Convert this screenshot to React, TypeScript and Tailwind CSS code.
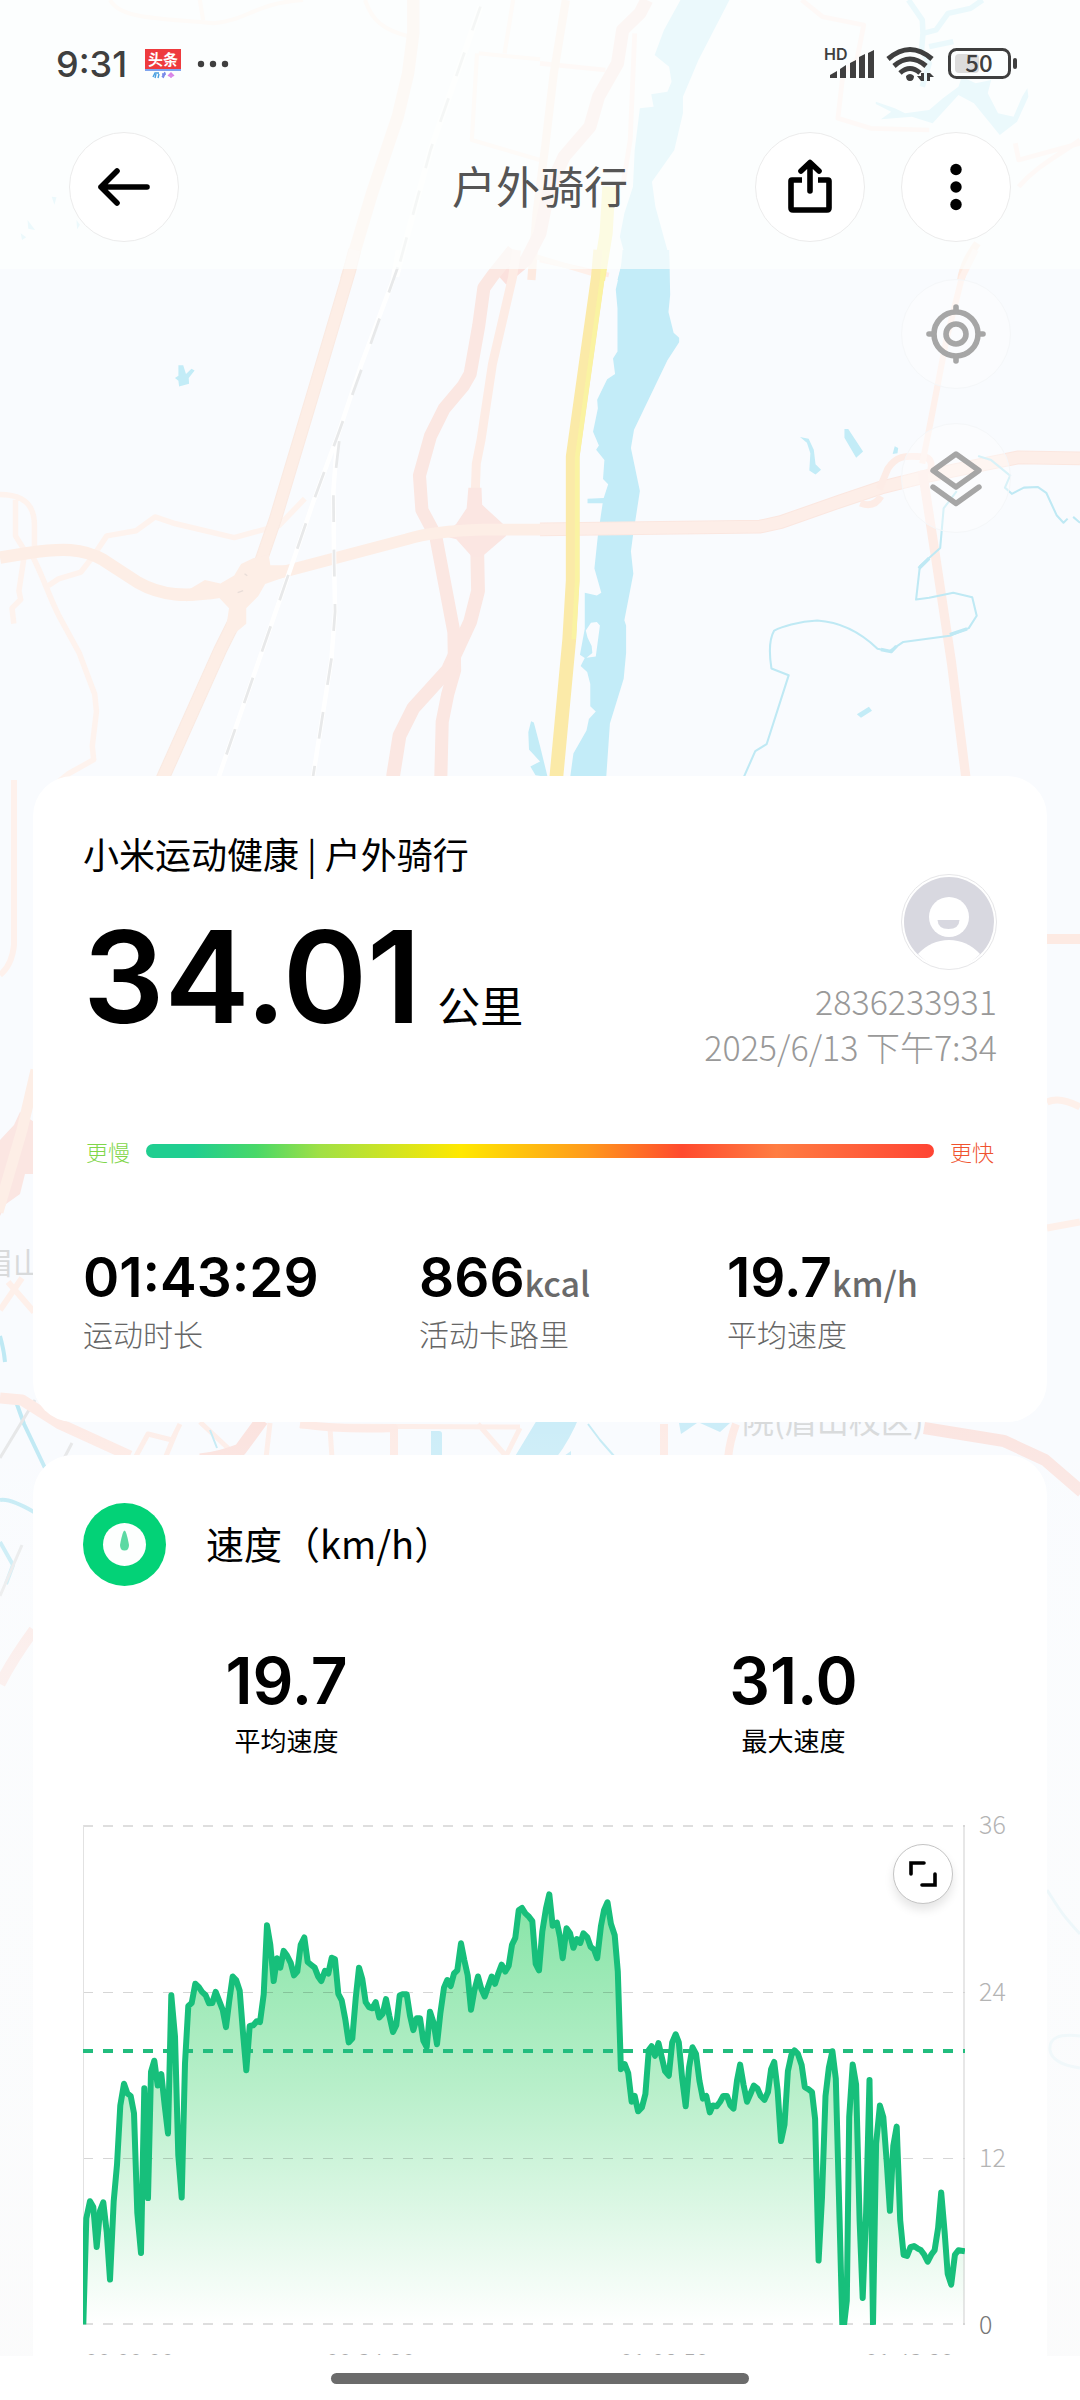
import type { ReactNode } from "react";

const FONT = "font-['Noto_Sans_CJK_SC','Noto_Sans',sans-serif]";

/* ---------- map ---------- */

function MapBackdrop() {
  return (
    <svg
      className="absolute inset-0 h-full w-full"
      viewBox="0 0 1080 2400"
      preserveAspectRatio="xMidYMin slice"
      aria-hidden="true"
      fill="none"
    >
      <defs>
        <linearGradient id="mapFade" x1="0" y1="0" x2="0" y2="1">
          <stop offset="0" stopColor="#fcfdfd" stopOpacity="0" />
          <stop offset="0.25" stopColor="#fcfdfd" stopOpacity="0.5" />
          <stop offset="1" stopColor="#fbfbfb" stopOpacity="0.9" />
        </linearGradient>
      </defs>
      <rect width="1080" height="2400" fill="#f9fbfe" />

      {/* north-west tile */}
      <g transform="scale(0.3444 0.3333)" strokeLinejoin="round">
        <path d="M320 0C350 60 480 55 620 70C720 60 740 10 880 0M580 0L590 60M1060 0C1080 60 1110 90 1190 110M1490 0L1465 160M1390 160L1568 178M1385 160L1370 420L1568 480" stroke="#fff0ea" strokeWidth="12" />
        <path d="M1200 0L1200 100L1185 220L1155 350L1080 580L1005 840" stroke="#fdeae1" strokeWidth="36" />
        <path d="M1395 20L1250 450L1150 830" stroke="#ffffff" strokeWidth="18" />
        <path d="M1395 20L1250 450L1150 830" stroke="#e3e3e3" strokeWidth="8" strokeDasharray="75 70" />
        <path d="M150 590l14 2-6 22zM80 660l22 30-20-4zM60 700l16 12-12 8zM222 660l10 14-8 14z" fill="#c3ecf7" />
      </g>

      {/* north-east tile */}
      <g transform="translate(540 0) scale(0.3444 0.3333)" strokeLinejoin="round">
        <path d="M275 100L262 420L240 560M0 190L190 210M760 0L820 50L940 75L920 180L880 220L865 355L960 385L1130 390M1380 430L1390 480L1568 430M1390 560C1440 500 1500 470 1568 420M0 780L200 825" stroke="#ffece6" strokeWidth="14" />
        <path d="M75 0L40 220L15 440L-10 640L-25 840" stroke="#fdeae1" strokeWidth="24" />
        <path d="M310 0L290 40L240 90L225 190L170 290L145 380L70 470L25 570L0 700L-40 780L-110 840" stroke="#fbe1dd" strokeWidth="38" />
        <path d="M408 0L550 0L490 120L460 180L415 290L415 340L390 450L325 545L335 620L375 770L375 840L225 840L245 760L232 710L245 640L270 560L275 450L290 325L330 320L323 283L370 275L382 245L375 200L333 165L360 90Z" fill="#c0eaf7" />
        <path d="M200 560L192 700L170 840" stroke="#fbf0a0" strokeWidth="38" />
        <path d="M1070 0L1110 60L1112 100L1150 90L1185 40L1250 25L1285 0M1112 100L1108 150L1130 190L1110 260M1130 140L1200 125" stroke="#c0eaf7" strokeWidth="16" />
        <path d="M975 305L1030 325L1060 340L1130 330L1170 295L1215 260L1225 230L1265 250L1310 240L1300 280L1330 340L1375 350L1400 290L1415 265L1418 290L1385 365L1335 405L1260 310L1215 285L1140 370L1080 350L990 358L1020 335L975 312Z" fill="#c0eaf7" />
        <path d="M1270 730C1250 760 1230 790 1222 840" stroke="#fdeae1" strokeWidth="22" />
      </g>

      {/* middle-left tile */}
      <g transform="translate(0 250) scale(0.3444)" strokeLinejoin="round">
        <g stroke="#fef3ee" strokeWidth="16">
          <path d="M0 710C70 710 100 740 100 800L100 860M45 725L45 830L70 870M70 890L55 990L60 1015L35 1040L40 1085M95 890C130 960 140 1000 170 1060L230 1170L275 1290L280 1340L268 1440L272 1480L200 1520L150 1560" />
          <path d="M140 975L170 955L235 935L270 890L310 830L395 815L450 775L510 795L680 835L810 800L885 722" />
        </g>
        <path d="M1030 0L1015 60L905 430L800 780L755 910" stroke="#faeae2" strokeWidth="38" />
        <path d="M1030 0L1015 60L905 430L800 780L755 910" stroke="#fdeee6" strokeWidth="32" />
        <path d="M0 893L80 880C180 865 240 865 300 900L400 965C470 1005 540 1008 640 992" stroke="#fdeee6" strokeWidth="36" />
        <path d="M690 1060L640 1160L472 1535" stroke="#faeae2" strokeWidth="40" />
        <path d="M690 1060L640 1160L472 1535" stroke="#fdeee6" strokeWidth="34" />
        <path d="M1490 0L1430 75L1405 110L1390 220L1365 360L1345 395L1290 460L1250 540L1218 655L1225 755L1265 830L1318 1110L1320 1220L1300 1290L1284 1370L1280 1530" stroke="#fbe7e2" strokeWidth="38" />
        <path d="M1385 840L1388 990L1365 1080L1300 1220L1200 1330L1160 1410L1141 1530" stroke="#fbe7e2" strokeWidth="40" />
        <path d="M1500 0L1488 80L1430 330L1397 550L1383 620L1378 760" stroke="#fdece5" strokeWidth="26" />
        <path d="M1360 690L1398 690L1400 740L1460 795L1470 830L1400 890L1370 890L1325 840L1285 830L1325 795L1355 750Z" fill="#fbe6e2" />
        <path d="M760 950L840 930L1180 840C1240 822 1300 815 1400 812L1568 812" stroke="#fdeee6" strokeWidth="34" />
        <path d="M680 945L700 912L735 895L780 885L785 915L840 915L840 945L770 970L750 1005L715 1040L715 1085L650 1140L665 1040L635 1008L540 1020L550 985L595 958L640 968Z" fill="#fdeee6" />
        <path d="M690 995l16-6M710 940l8 6" stroke="#e9ddd8" strokeWidth="4" />
        <path d="M1155 0L1140 90L1050 330L980 540L910 730L835 950L635 1530M980 540L968 700L970 900L973 1050L962 1190L908 1535" stroke="#ffffff" strokeWidth="13" />
        <path d="M1155 50L1070 290L980 540L910 730L835 950L635 1530M985 555L968 700L970 900L973 1050L962 1190L908 1535" stroke="#e8e9ea" strokeWidth="8" strokeDasharray="78 80" />
        <path d="M518 335L532 335L540 360L556 345L565 350L548 372L549 388L520 396L518 380L508 372L518 365Z" fill="#c3ecf7" />
        <path d="M1534 1400L1542 1368L1550 1372L1568 1440L1590 1530L1555 1525L1540 1500L1568 1485L1536 1450Z" fill="#c3ecf7" />
      </g>

      {/* middle-right tile */}
      <g transform="translate(540 250) scale(0.3444)" strokeLinejoin="round">
        <path d="M240 0L375 0L378 130L373 180L388 240L404 255L404 268L370 320L273 522L264 575L290 700L270 830L264 875L271 940L245 1075L250 1090L250 1170L243 1245L203 1375L192 1535L87 1535L97 1462L135 1395L142 1362L162 1340L146 1325L146 1260L137 1225L118 1208L130 1185L116 1175L130 1100L130 995L165 1003L178 995L158 925L168 830L182 735L138 735L138 722L185 720L198 680L183 665L187 610L163 580L171 568L154 528L168 460L166 435L195 375L218 360L212 315L225 295L225 170L220 115L235 50Z" fill="#c3ecf8" />
        <path d="M133 1105L148 1082L165 1080L174 1090L162 1180L135 1184L152 1170L150 1150L138 1125Z" fill="#f9fbfe" />
        <path d="M-10 20L150 68" stroke="#fef0ea" strokeWidth="14" />
        <path d="M0 811L640 803L700 790L870 730L990 690L1130 655L1300 620L1390 602L1568 605" stroke="#fbe7e0" strokeWidth="40" />
        <path d="M0 811L640 803L700 790L870 730L990 690L1130 655L1300 620L1390 602L1568 605" stroke="#fdeee8" strokeWidth="34" />
        <path d="M985 695L1010 635C1040 590 1070 600 1115 600Q1145 605 1132 650M930 735Q970 750 990 715" stroke="#fdece6" strokeWidth="20" />
        <path d="M1110 640L1150 900L1195 1200L1237 1535" stroke="#fdece6" strokeWidth="27" />
        <path d="M1265 0L1225 80L1180 260L1130 520L1110 620" stroke="#fef1ec" strokeWidth="18" />
        <path d="M175 0L168 80L130 350L95 600L95 960L85 1130L47 1535" stroke="#fbeaa8" strokeWidth="40" />
        <path d="M188 0L181 80L143 350L108 600L108 960L98 1130" stroke="#faf3a2" strokeWidth="13" />
        <path d="M755 543L780 548L795 580L800 622L816 638L800 652L782 640L785 590L775 560ZM884 520L895 520L938 585L918 603L884 545ZM1030 570l10 5-2 15-14 2zM920 1348L955 1326L964 1338L932 1358Z" fill="#c3ecf7" />
        <g stroke="#bfe9f4" strokeWidth="6">
          <path d="M1272 598L1310 610L1365 655L1350 690L1370 708L1405 690L1445 688L1470 705L1500 770L1520 792L1532 780M1548 775L1568 792" />
          <path d="M1210 700L1172 750L1162 865L1103 918L1092 1015L1130 1010L1200 995L1255 1008L1268 1062L1245 1098L1190 1120L1055 1138L1015 1165L980 1158C930 1110 870 1080 805 1076C750 1078 700 1095 680 1105Q660 1140 672 1215L722 1235L658 1435L625 1455L592 1530" />
          <path d="M990 1160L1020 1166L1035 1150M1190 1117L1240 1100M1100 925L1130 895" strokeWidth="10" />
        </g>
      </g>

      {/* southern strip and the margins beside the cards */}
      <g strokeLinejoin="round">
        <path d="M14 780L14 945Q12 965 0 975" stroke="#fef1ec" strokeWidth="6" />
        <path d="M0 1140L14 1125L20 1112L34 1122L34 1174L25 1174L20 1194L6 1204L0 1216Z" fill="#fbe6e2" />
        <path d="M36 1070L22 1130L-2 1212" stroke="#fdeee6" strokeWidth="11" />
        <path d="M8 1282L34 1312M22 1278L0 1310" stroke="#fef0ea" strokeWidth="6" />
        <path d="M0 1336Q4 1350 5 1362M14 1396L24 1424L45 1468M0 1500Q10 1498 34 1512M0 1542L13 1565L6 1584" stroke="#bfe9f4" strokeWidth="4" />
        <path d="M1047 939L1080 939" stroke="#fdeae3" strokeWidth="10" />
        <path d="M1047 1102Q1060 1096 1080 1107M1047 1228L1080 1222" stroke="#fef0ea" strokeWidth="7" />
        <path d="M35 1400L0 1458M72 1443L60 1466M22 1545L0 1596" stroke="#e6e7e8" strokeWidth="3" />
        <path d="M0 1398L22 1400L60 1424L130 1456" stroke="#fdebe6" strokeWidth="11" />
        <path d="M135 1458L148 1434L172 1440L180 1424M166 1456L176 1432M200 1422L230 1450M270 1423L266 1458M330 1428L332 1458M300 1426L520 1427M478 1424L506 1456L520 1428" stroke="#fdeee9" strokeWidth="5" />
        <path d="M300 1424Q340 1430 394 1428L394 1458M664 1424L664 1458M736 1424Q730 1440 728 1458" stroke="#fdebe6" strokeWidth="8" />
        <path d="M262 1420L240 1450Q220 1458 200 1460" stroke="#fbe3df" strokeWidth="13" />
        <path d="M210 1430L217 1448M588 1424L600 1440L614 1456" stroke="#c5ebf5" strokeWidth="2" />
        <path d="M431 1431h8q3 0 3 3v24h-11zM540 1415L580 1415Q570 1440 556 1458L514 1458ZM564 1456l7-5v7zM679 1423h18l-10 7-6 4zM700 1423h30l-10 9z" fill="#ccedf8" />
        <path d="M924 1428L1004 1441L1045 1460L1082 1492" stroke="#fbe5e1" strokeWidth="12" />
        <path d="M0 1684Q12 1660 34 1630" stroke="#fbe3df" strokeWidth="11" />
        <path d="M1047 1890C1060 1910 1060 1912 1080 1934M1080 2036Q1048 2032 1050 2050Q1052 2064 1080 2068" stroke="#d5eef6" strokeWidth="3" />
      </g>
      <g fill="#d8dadb" className={FONT}>
        <text x="-17" y="1274" fontSize="30">眉山</text>
        <text x="742" y="1433" fontSize="32">院(眉山校区)</text>
      </g>
      <rect y="1420" width="1080" height="980" fill="url(#mapFade)" />
    </svg>
  );
}

/* ---------- status bar ---------- */

function StatusBar() {
  return (
    <div className="flex h-[128px] items-center justify-between pl-[56px] pr-[62px] text-[#3f3f3f]">
      <div className="flex items-center">
        <span className="font-['Inter',sans-serif] text-[36px] font-medium leading-[48px]">9:31</span>
        <div className="ml-[18px] flex flex-col items-center">
          <span className="flex h-[22px] w-[36px] items-center justify-center border-b-2 border-[#7fa4ee] bg-[#ee3b3e] text-[15px] font-bold leading-[20px] text-white">
            头条
          </span>
          <svg width="24" height="8" viewBox="0 0 24 8" fill="none" strokeWidth="1.4" aria-hidden="true">
            <path d="M2 6l2-4 4 0M5 3l-1 4M8 3l-1 4" stroke="#4a9fe0" />
            <path d="M11 6l3-5M11 3l4 0M14 3l-2 4" stroke="#7a8be8" />
            <path d="M17 5l3-3 3 3M18 5h4M20 3v4" stroke="#d884e6" />
          </svg>
        </div>
        <svg className="ml-[16px]" width="32" height="8" viewBox="0 0 32 8" fill="#3f3f3f" aria-hidden="true">
          <circle cx="4" cy="4" r="3.2" />
          <circle cx="16" cy="4" r="3.2" />
          <circle cx="28" cy="4" r="3.2" />
        </svg>
      </div>
      <div className="flex items-center">
        <svg className="overflow-visible" width="110" height="40" viewBox="0 0 110 40" fill="#3f3f3f" aria-hidden="true">
          <text x="0" y="16" fontSize="16" fontWeight="600" fontFamily="Inter, sans-serif">HD</text>
          <path d="M6 34v-3l7-4v7zM16 34V25l6-4v13zM26 34V19l6-3v18zM35 34V13l6-3v24zM44 34V9l6-3v28z" />
          <g fill="none" stroke="#3f3f3f" strokeWidth="5">
            <path d="M64 15Q86-4 108 15" />
            <path d="M70 22Q86 8 102 22" />
            <path d="M76 29Q86 20 96 29" />
          </g>
          <path d="M82 32q4-4 8 0q0 5-4 5t-4-5zM97 29h3v8h-3l-4-5h4zM103 37v-8l3 0 4 4h-4v4z" />
        </svg>
        <svg className="ml-[14px]" width="70" height="32" viewBox="0 0 70 32" aria-hidden="true">
          <rect x="1.5" y="1.5" width="60" height="28" rx="7" fill="none" stroke="#3f3f3f" strokeWidth="3" />
          <rect x="7" y="6" width="24" height="19" rx="4" fill="#dcdcdc" />
          <rect x="65" y="10" width="4" height="11" rx="2" fill="#3f3f3f" />
          <text x="31" y="24" fontSize="24" fontWeight="500" textAnchor="middle" fill="#3f3f3f">50</text>
        </svg>
      </div>
    </div>
  );
}

/* ---------- buttons ---------- */

function RoundButton({ label, children }: { label: string; children: ReactNode }) {
  return (
    <button
      type="button"
      aria-label={label}
      className="flex size-[110px] items-center justify-center rounded-full border border-[#ececec] bg-white"
    >
      {children}
    </button>
  );
}

function MapButton({ label, children }: { label: string; children: ReactNode }) {
  return (
    <button
      type="button"
      aria-label={label}
      className="flex size-[110px] items-center justify-center rounded-full border border-[#f5f7f9] bg-white/40"
    >
      {children}
    </button>
  );
}

function TopBar() {
  return (
    <div className="flex h-[118px] items-center justify-between px-[69px]">
      <div className="flex flex-1">
        <RoundButton label="返回">
          <svg width="54" height="40" viewBox="0 0 54 40" fill="none" stroke="#000" strokeWidth="5.6" strokeLinecap="round" strokeLinejoin="round" aria-hidden="true">
            <path d="M50 20H4M20 4L4 20L20 36" />
          </svg>
        </RoundButton>
      </div>
      <h1 className="pb-1 text-[44px] font-normal leading-[56px] text-[#555]">户外骑行</h1>
      <div className="flex flex-1 justify-end gap-[36px]">
        <RoundButton label="分享">
          <svg width="46" height="56" viewBox="0 0 46 56" fill="none" stroke="#000" strokeWidth="5.6" strokeLinecap="round" strokeLinejoin="round" aria-hidden="true">
            <path d="M15 21H5Q4 21 4 22V49Q4 51 6 51H40Q42 51 42 49V22Q42 21 41 21H31" strokeLinecap="butt" />
            <path d="M23 32V4M14 12L23 3.500L32 12" />
          </svg>
        </RoundButton>
        <RoundButton label="更多">
          <svg width="12" height="48" viewBox="0 0 12 48" fill="#000" aria-hidden="true">
            <circle cx="6" cy="6.500" r="5.700" />
            <circle cx="6" cy="24" r="5.700" />
            <circle cx="6" cy="41.500" r="5.700" />
          </svg>
        </RoundButton>
      </div>
    </div>
  );
}

function MapControls() {
  return (
    <div className="flex h-[507px] flex-col items-end gap-[34px] pr-[69px] pt-[10px]">
      <MapButton label="定位">
        <svg width="62" height="62" viewBox="0 0 62 62" fill="none" stroke="#a6a6a6" strokeWidth="5.600" strokeLinecap="round" aria-hidden="true">
          <circle cx="31" cy="31" r="22" />
          <circle cx="31" cy="31" r="10" />
          <path d="M31 4v4M31 54v4M4 31h4M54 31h4" />
        </svg>
      </MapButton>
      <MapButton label="图层">
        <svg width="56" height="60" viewBox="0 0 56 60" fill="none" stroke="#a6a6a6" strokeWidth="5.400" strokeLinecap="round" strokeLinejoin="round" aria-hidden="true">
          <path d="M28 6L51 22.500L28 39L5 22.500Z" />
          <path d="M5 39L28 55.500L51 39" />
        </svg>
      </MapButton>
    </div>
  );
}

/* ---------- summary card ---------- */

const stats = [
  { value: "01:43:29", unit: "", label: "运动时长" },
  { value: "866", unit: "kcal", label: "活动卡路里" },
  { value: "19.7", unit: "km/h", label: "平均速度" },
];

function Avatar() {
  return (
    <svg className="size-[96px]" viewBox="0 0 96 96" role="img" aria-label="头像">
      <circle cx="48" cy="48" r="47.500" fill="#fff" stroke="#e6e6e8" />
      <circle cx="48" cy="48" r="45" fill="#d8d8e0" />
      <circle cx="48" cy="43" r="20" fill="#fff" />
      <path d="M36.500 46H58.500Q58 55 47.500 55T36.500 46Z" fill="#d8d8e0" />
      <path d="M17 80Q30 66 48 66T79 80Q66 94 48 94T17 80Z" fill="#fff" />
    </svg>
  );
}

function SummaryCard() {
  return (
    <section className="mx-[33px] rounded-[40px] bg-white px-[50px] pb-[69px] pt-[53px]">
      <div className="flex justify-between">
        <div>
          <h2 className="text-[36px] font-normal leading-[48px] text-black">小米运动健康 | 户外骑行</h2>
          <p className="mt-[28px] flex items-baseline leading-[48px] text-black">
            <span className="font-['Inter',sans-serif] text-[128px] font-semibold leading-[144px]">34.01</span>
            <span className="ml-[16px] text-[43px]">公里</span>
          </p>
        </div>
        <div className="flex flex-col items-end pt-[45px] text-[34px] font-light leading-[46px] text-[#999]">
          <Avatar />
          <span className="mt-[8px]">2836233931</span>
          <span>2025/6/13 下午7:34</span>
        </div>
      </div>
      <div className="mt-[65px] flex h-[32px] items-center gap-[16px] px-[3px] text-[22px] leading-[32px]">
        <span className="font-light text-[#7fd64a]">更慢</span>
        <div className="h-[14px] flex-1 rounded-full bg-[linear-gradient(90deg,#20ce90_0%,#20ce90_6%,#48d868_14%,#a0e045_22%,#ffe800_40%,#ff9a1c_56%,#ff4a2e_68%,#ff7d42_80%,#ff4433_100%)]" />
        <span className="font-light text-[#f0532f]">更快</span>
      </div>
      <dl className="mt-[78px] grid grid-cols-[336fr_308fr_270fr]">
        {stats.map((s) => (
          <div key={s.label} className="flex flex-col-reverse">
            <dt className="mt-[4px] text-[30px] font-light leading-[40px] text-[#666]">{s.label}</dt>
            <dd className="flex h-[64px] items-baseline whitespace-nowrap text-black">
              <span className="font-['Inter',sans-serif] text-[55px] font-semibold leading-[64px]">{s.value}</span>
              {s.unit && <span className="text-[34px] font-medium leading-[34px] text-[#6a6a6a]">{s.unit}</span>}
            </dd>
          </div>
        ))}
      </dl>
    </section>
  );
}

/* ---------- speed card ---------- */

const PLOT_W = 882;
const PLOT_H = 500;

const firstHalf =
  "70,1372 79,1095 90,1050 100,1065 110,1170 120,1075 130,1053 140,1130 150,1255 161,1050 171,955 181,800 192,743 202,768 212,775 222,820 232,1080 243,1185 253,755 264,1042 273,712 283,683 293,748 304,718 314,800 324,873 334,512 345,620 355,930 365,1040 375,690 385,540 395,532 406,482 416,490 426,503 437,512 447,533 457,532 467,503 477,525 488,550 498,595 508,525 518,463 529,473 539,500 549,610 559,708 569,592 580,590 590,580 600,582 611,510 621,329 631,380 641,475 651,415 661,440 671,396 681,408 692,427 702,460 712,450 722,380 733,361 743,425 753,432 764,440 774,462 784,475 795,448 805,455 815,414 825,418 835,508 845,525 856,575 866,635 877,625 887,520 897,440 907,470 917,530 927,543 937,546 947,530 958,570 968,560 978,522 988,565 999,608 1009,590 1019,512 1029,509 1040,509 1050,565 1060,603 1070,572 1080,572 1090,630 1100,647 1110,555 1121,585 1131,640 1141,560 1152,492 1162,472 1172,488 1182,455 1192,447 1203,376 1213,420 1223,460 1233,550 1243,500 1254,463 1264,495 1274,515 1284,490 1295,463 1305,482 1315,455 1325,432 1336,450 1346,435 1356,380 1366,362 1376,290 1386,284 1396,298 1407,307 1417,318 1427,430 1437,447 1447,345 1458,285 1468,248";
const secondHalf =
  "37,330 49,322 58,360 66,415 77,337 87,350 97,388 107,365 117,375 126,350 137,360 147,385 157,393 166,415 177,330 186,290 196,269 206,325 217,355 226,450 235,705 246,692 256,715 266,790 275,775 285,815 296,805 306,770 316,655 324,645 334,670 344,637 354,675 363,710 374,722 384,635 394,614 403,635 413,730 423,802 433,700 443,648 453,665 463,735 473,782 483,775 493,818 502,800 513,802 523,790 532,775 543,775 553,800 562,808 572,735 581,693 591,745 601,790 611,770 621,748 631,755 641,775 652,785 662,765 671,705 680,686 690,760 700,893 710,850 720,710 730,668 739,656 749,665 760,695 769,752 780,758 790,765 799,835 809,1205 819,1040 829,775 839,700 849,658 859,730 870,1100 878,1372 883,1372 891,1310 898,830 908,693 918,745 928,1100 937,1303 947,1080 957,733 967,1372 976,900 987,800 997,830 1007,950 1016,1075 1026,905 1036,855 1046,1100 1056,1190 1066,1193 1076,1170 1086,1167 1096,1173 1106,1178 1116,1190 1126,1208 1136,1190 1146,1178 1156,1120 1165,1027 1175,1130 1184,1240 1194,1268 1205,1190 1215,1178 1234,1181";

const toPlot = (src: string, x0: number, scale: number) =>
  src.split(" ").map((p) => {
    const [t, d] = p.split(",").map(Number);
    return `${(x0 + t / scale).toFixed(1)},${((d - 67) / 2.613).toFixed(1)}`;
  });

const line = [...toPlot(firstHalf, -23, 3), ...toPlot(secondHalf, 457, 2.904)].join(" ");

function SpeedChart() {
  return (
    <svg
      className="block h-[500px] w-full"
      viewBox={`0 0 ${PLOT_W} ${PLOT_H}`}
      preserveAspectRatio="none"
      role="img"
      aria-label="速度曲线"
      fill="none"
    >
      <defs>
        <linearGradient id="speedFill" gradientUnits="userSpaceOnUse" x1="0" y1="70" x2="0" y2="500">
          <stop offset="0" stopColor="#86e4a6" />
          <stop offset="0.45" stopColor="#b8efca" />
          <stop offset="1" stopColor="#ffffff" />
        </linearGradient>
      </defs>
      <polygon points={`0,500 ${line} 881,500`} fill="url(#speedFill)" />
      <path d="M0 1H882M0 499H882" stroke="#dedede" strokeWidth="2" strokeDasharray="10 10" />
      <path d="M0 167.500H882M0 333.500H882" stroke="#000" strokeOpacity="0.16" strokeDasharray="10 10" />
      <path d="M0.500 0V500" stroke="#e2e2e2" />
      <path d="M881 0V500" stroke="#cfcfcf" />
      <path d="M0 226H882" stroke="#22bd7e" strokeWidth="4" strokeDasharray="10 10" />
      <polyline points={line} stroke="#17bf7b" strokeWidth="6" strokeLinejoin="round" />
    </svg>
  );
}

function SpeedCard() {
  return (
    <section className="mx-[33px] mt-[33px] flex-1 rounded-t-[40px] bg-white pt-[48px]">
      <div className="flex items-center gap-[40px] pl-[50px]">
        <svg className="size-[83px]" viewBox="0 0 83 83" aria-hidden="true">
          <circle cx="41.500" cy="41.500" r="41.500" fill="#03d277" />
          <circle cx="41.500" cy="41.500" r="21.500" fill="#fdfffe" />
          <path d="M41.500 27.500Q43.500 28 46 42Q46 47.500 41.500 47.500T37 42Q39.500 28 41.500 27.500Z" fill="#5cd9a3" />
        </svg>
        <h2 className="pb-1 text-[38px] font-normal leading-[56px] text-black">速度（km/h）</h2>
      </div>
      <dl className="mt-[59px] grid grid-cols-2 text-center text-black">
        <div className="flex flex-col-reverse">
          <dt className="mt-[5px] text-[26px] leading-[36px]">平均速度</dt>
          <dd className="font-['Inter',sans-serif] text-[64px] font-semibold leading-[72px]">19.7</dd>
        </div>
        <div className="flex flex-col-reverse">
          <dt className="mt-[5px] text-[26px] leading-[36px]">最大速度</dt>
          <dd className="font-['Inter',sans-serif] text-[64px] font-semibold leading-[72px]">31.0</dd>
        </div>
      </dl>
      <div className="mt-[67px] flex pl-[50px]">
        <div className="relative min-w-0 flex-1">
          <SpeedChart />
          <button
            type="button"
            aria-label="全屏"
            className="absolute right-[12px] top-[19px] flex size-[60px] items-center justify-center rounded-full border border-[#c4c4c4] bg-white shadow-[0_6px_10px_rgba(0,0,0,0.1)]"
          >
            <svg width="28" height="28" viewBox="0 0 28 28" fill="none" stroke="#000" strokeWidth="3.600" strokeLinecap="round" aria-hidden="true">
              <path d="M2 14V3H15M13 25H26V14" strokeLinejoin="miter" />
            </svg>
          </button>
        </div>
        <div className="flex w-[82px] flex-col justify-between pl-[14px]">
          <span className="-mt-[14px] text-[25px] font-light leading-[24px] text-[#b4b4b4]">36</span>
          <span className="text-[25px] font-light leading-[24px] text-[#b4b4b4]">24</span>
          <span className="text-[25px] font-light leading-[24px] text-[#b4b4b4]">12</span>
          <span className="-mb-[10px] text-[25px] font-light leading-[24px] text-[#777]">0</span>
        </div>
      </div>
      <div className="ml-[52px] mr-[82px] mt-[24px] grid h-[6px] grid-cols-[241fr_294fr_245fr_100fr] overflow-hidden text-[24px] font-light leading-[24px] text-[#aaa]">
        <span>00:00:00</span>
        <span>00:34:30</span>
        <span>01:08:59</span>
        <span>01:43:29</span>
      </div>
    </section>
  );
}

export default function App() {
  return (
    <main className={`${FONT} relative flex min-h-screen w-full flex-col overflow-hidden bg-[#f9fbfe]`}>
      <MapBackdrop />
      <div className="relative flex flex-1 flex-col">
        <header className="h-[269px] bg-[#fdfffe]/70">
          <StatusBar />
          <TopBar />
        </header>
        <MapControls />
        <SummaryCard />
        <SpeedCard />
        <footer className="flex h-[44px] items-start justify-center bg-white pt-[17px]">
          <div className="h-[11px] w-[418px] rounded-full bg-[#6b6b6b]" />
        </footer>
      </div>
    </main>
  );
}
